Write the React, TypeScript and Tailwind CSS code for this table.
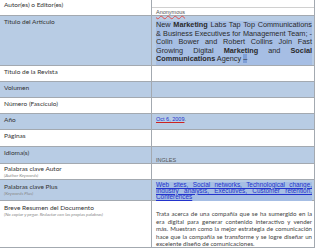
const label = "font-['Lato',sans-serif] text-[6.5px] leading-[8px] text-[#333]";
const sub = "font-['Lato',sans-serif] italic text-[4.5px] leading-[6px] text-[#888]";

function Row({
  h,
  blue,
  left,
  right,
  rightClass = "",
}: {
  h: string;
  blue?: boolean;
  left: React.ReactNode;
  right?: React.ReactNode;
  rightClass?: string;
}) {
  return (
    <div className={`flex border-b border-[#a3a9b0] ${h} ${blue ? "bg-[#b8cce4]" : "bg-white"}`}>
      <div className="w-[152px] shrink-0 border-r border-[#a3a9b0] pl-[4px] pt-[2px]">{left}</div>
      <div className={`flex-1 pl-[4px] pr-[2px] ${rightClass}`}>{right}</div>
    </div>
  );
}

export default function App() {
  return (
    <div className="w-[320px] h-[251px] bg-white overflow-hidden">
      <div className="w-[315px] border-r border-[#a3a9b0]">
        <Row
          h="h-[16px]"
          left={<div className={`${label} -mt-[1px]`}>Autor(es) o Editor(es)</div>}
          rightClass="pt-[8px] border-t border-t-[#d0d0d0] mt-[7px]"
          right={
            <div className="font-['Liberation_Sans',sans-serif] text-[5.5px] leading-[6px] text-[#555] underline decoration-wavy decoration-[#e05050] -mt-[8px] pt-[1px]">
              Anonymous
            </div>
          }
        />
        <Row
          h="h-[50px]"
          blue
          left={<div className={label}>Título del Artículo</div>}
          rightClass="pt-[5px]"
          right={
            <div className="bg-[#a6bee4] font-['Liberation_Sans',sans-serif] text-[7.3px] leading-[8.6px] text-[#2a2a2a] text-justify [text-align-last:left] pb-[1px]">
              New <b>Marketing</b> Labs Tap Top Communications &amp; Business Executives for Management Team; - Colin Bower and Robert Collins Join Fast Growing Digital <b>Marketing</b> and <b>Social Communications</b> Agency <span className="bg-[#7f9fd6]">–</span>
            </div>
          }
        />
        <Row h="h-[16px]" left={<div className={label}>Título de la Revista</div>} />
        <Row h="h-[16px]" blue left={<div className={label}>Volumen</div>} />
        <Row h="h-[16px]" left={<div className={label}>Número (Fascículo)</div>} />
        <Row
          h="h-[16px]"
          blue
          left={<div className={label}>Año</div>}
          rightClass="pt-[2px]"
          right={
            <div className="font-['Liberation_Sans',sans-serif] text-[5.5px] leading-[7px] text-[#555]">
              <span className="text-[#2233cc] underline decoration-[#cc2222]">Oct 6, 2009</span>.
            </div>
          }
        />
        <Row h="h-[17px]" left={<div className={label}>Páginas</div>} />
        <Row
          h="h-[17px]"
          blue
          left={<div className={label}>Idioma(s)</div>}
          rightClass="pt-[10px]"
          right={
            <div className="font-['Liberation_Sans',sans-serif] text-[5.5px] leading-[6px] text-[#555]">INGLES</div>
          }
        />
        <Row
          h="h-[16px]"
          left={
            <div className="-mt-[1px]">
              <div className={label}>Palabras clave Autor</div>
              <div className={sub}>(Author Keywords)</div>
            </div>
          }
        />
        <Row
          h="h-[21px]"
          blue
          left={
            <div className="pt-[1px]">
              <div className={label}>Palabras clave Plus</div>
              <div className={sub}>(Keywords Plus)</div>
            </div>
          }
          rightClass="pt-[1.5px]"
          right={
            <div className="bg-[#a6bee4] font-['Liberation_Sans',sans-serif] text-[6.4px] leading-[6.2px] text-[#2233cc] underline text-justify [text-align-last:left] pb-[0.5px]">
              Web sites, Social networks, Technological change, Industry analysis, Executives, Customer retention, Conferences
            </div>
          }
        />
        <Row
          h="h-[47px]"
          left={
            <div className="pt-[1px]">
              <div className={label}>Breve Resumen del Documento</div>
              <div className={sub}>(No copiar y pegar. Redactar con las propias palabras)</div>
            </div>
          }
          rightClass="pt-[9px]"
          right={
            <div className="font-['Lato',sans-serif] text-[6.1px] leading-[7.5px] text-[#444] text-justify [text-align-last:left]">
              Trata acerca de una compañía que se ha sumergido en la era digital para generar contenido interactivo y vender más. Muestran como la mejor estrategia de comunicación hace que la compañía se transforme y se logre diseñar un excelente diseño de comunicaciones.
            </div>
          }
        />
      </div>
    </div>
  );
}
